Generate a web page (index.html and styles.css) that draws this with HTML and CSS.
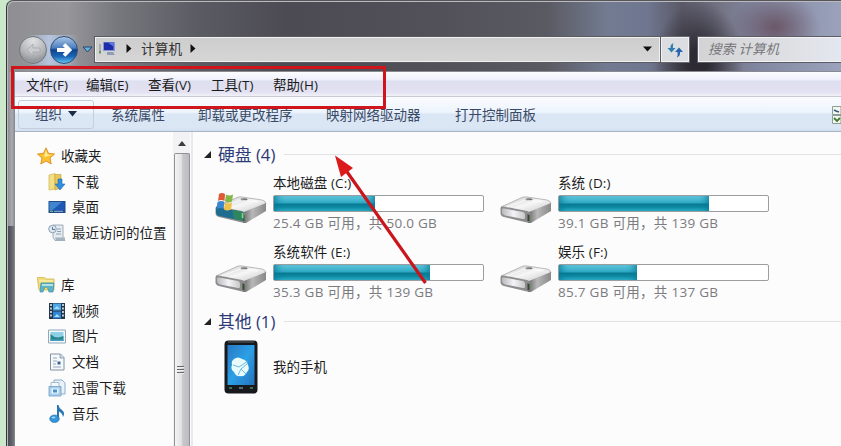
FILE: index.html
```html
<!DOCTYPE html>
<html lang="zh-CN">
<head>
    <meta charset="UTF-8">
    <meta name="viewport" content="width=device-width, initial-scale=1.0">
    <title>计算机</title>
    <link rel="stylesheet" href="styles.css">
</head>
<body>

    <!-- shared shapes -->
    <svg class="defs" width="0" height="0">
        <defs>
            <linearGradient id="driveTop" x1="0" y1="0" x2="1" y2="1">
                <stop offset="0" stop-color="#c9c9c9"/>
                <stop offset=".5" stop-color="#f6f6f6"/>
                <stop offset="1" stop-color="#c5c5c5"/>
            </linearGradient>
            <linearGradient id="driveSide" x1="0" y1="0" x2="1" y2="0">
                <stop offset="0" stop-color="#6a6a6a"/>
                <stop offset=".4" stop-color="#b8b8b8"/>
                <stop offset="1" stop-color="#888"/>
            </linearGradient>
            <linearGradient id="driveFront" x1="0" y1="0" x2="1" y2="0">
                <stop offset="0" stop-color="#b9b9bd"/>
                <stop offset=".5" stop-color="#f4f4f8"/>
                <stop offset="1" stop-color="#c8c8c8"/>
            </linearGradient>
            <linearGradient id="screen" x1="0" y1="0" x2="1" y2="1">
                <stop offset="0" stop-color="#2a78c4"/>
                <stop offset=".5" stop-color="#2ba0e6"/>
                <stop offset="1" stop-color="#2472bd"/>
            </linearGradient>
            <symbol id="drive" viewBox="0 0 54 30">
                <path d="M2 18l28 10 22-13v-6L30 20z" fill="#6d6d6d" opacity=".35"/>
                <path d="M2 12L23 2.500q2-1 5-.5l20 3q4 1 4 4L31 18z" fill="url(#driveTop)" stroke="#aaa" stroke-width=".8"/>
                <path d="M30 17L52 8v8L32 28h-3z" fill="url(#driveSide)"/>
                <path d="M1.500 13q0-2 3-1.500L28 16q3 .6 3 4v5q0 3-3 2.500L5 22q-3.500-1-3.500-4z" fill="#8d8d8d"/>
                <path d="M3 14.500q0-1.500 2-1L24 17q2 .5 2 2.500v3q0 2-2 1.500L6 20.500q-3-.8-3-3z" fill="url(#driveFront)"/>
                <path d="M28.500 19v7l2 .2v-6z" fill="#31482c"/>
                <ellipse cx="30" cy="4.500" rx="3.500" ry="1.300" fill="#777"/>
                <path d="M8 12L26 5l18 2" fill="none" stroke="#fff" opacity=".7"/>
            </symbol>
        </defs>
    </svg>

    <div class="window">

        <!-- address bar -->
        <div class="titlebar">
            <div class="nav-buttons">
                <span class="nav-btn back">
                    <svg width="18" height="16" viewBox="0 0 18 16"><path d="M9 2L3 8l6 6v-4h7V6H9z" fill="#c9cbce" stroke="#a3a5a9" stroke-width=".7"/></svg>
                </span>
                <span class="nav-btn forward">
                    <svg width="18" height="16" viewBox="0 0 18 16"><path d="M2 8h12M9 2.500L14.500 8 9 13.500" fill="none" stroke="#fff" stroke-width="3.800"/></svg>
                </span>
                <svg class="nav-drop" width="11" height="7" viewBox="0 0 11 7"><path d="M1 1h9L5.500 6z" fill="#68aee0" stroke="#23466e"/></svg>
            </div>
            <div class="address">
                <svg width="20" height="16" viewBox="0 0 20 16">
                    <path d="M1 3h2v10H1z" fill="#a7ada8"/>
                    <path d="M1 10h2v2H1z" fill="#5f9c5b"/>
                    <path d="M5 1h12v9H5z" fill="#8b94d2"/>
                    <path d="M6 1.500h9.500v7.500H6z" fill="#1d2cab"/>
                    <path d="M10 1.500h5.500v4z" fill="#5f7be0"/>
                    <path d="M9 11h6l2 3H9z" fill="#8e9fb5"/>
                </svg>
                <svg class="crumb" width="6" height="9" viewBox="0 0 6 9"><path d="M.5 0L5.500 4.500l-5 4.500z" fill="#111"/></svg>
                <span class="crumb-text">计算机</span>
                <svg class="crumb" width="6" height="9" viewBox="0 0 6 9"><path d="M.5 0L5.500 4.500l-5 4.500z" fill="#111"/></svg>
                <svg class="address-drop" width="9" height="6" viewBox="0 0 9 6"><path d="M0 .5h9L4.500 5.500z" fill="#111"/></svg>
            </div>
            <div class="refresh">
                <svg width="16" height="16" viewBox="0 0 16 16">
                    <path d="M6.500 1Q3 2.500 3.500 6H.5l4 4.500 4-4.500H6q-.5-3 .5-5z" fill="#2f7fae"/>
                    <path d="M10 15.500q3.500-1.500 3-5.500h3l-4-4.500L8 10h2.500q.5 3-.5 5.500z" fill="#2665ad"/>
                </svg>
            </div>
            <div class="search">搜索 计算机</div>
        </div>

        <div class="menubar">
            <span>文件(F)</span>
            <span>编辑(E)</span>
            <span>查看(V)</span>
            <span>工具(T)</span>
            <span>帮助(H)</span>
        </div>

        <div class="toolbar">
            <span class="organize">组织 <svg width="9" height="6" viewBox="0 0 9 6"><path d="M0 0h9L4.500 5.500z" fill="#1b2c45"/></svg></span>
            <span>系统属性</span>
            <span>卸载或更改程序</span>
            <span>映射网络驱动器</span>
            <span>打开控制面板</span>
            <svg class="view-btn" width="9" height="18" viewBox="0 0 9 18">
                <path d="M.5.500H9v8H.5zM.5 9.500H9v8H.5z" fill="#f2f6ee" stroke="#8b9f96"/>
                <path d="M2 4l2 1 3 1" fill="none" stroke="#3a5880" stroke-width="1.500"/>
                <path d="M2 12l3 3 3-3" fill="none" stroke="#3d7d2e" stroke-width="1.800"/>
            </svg>
        </div>

        <div class="content">
            <!-- navigation pane -->
            <div class="sidebar">
                <div class="nav-group">
                    <div class="nav-item root">
                        <svg width="18" height="18" viewBox="0 0 18 18"><path d="M9 .8l2.500 5.500 6 .7-4.500 4 1.200 6L9 14l-5.200 3L5 11 .5 7l6-.7z" fill="#f9c02f" stroke="#dd8b24" stroke-width=".9"/><path d="M9 3l1.500 4.500 4.500.5-8 2z" fill="#fff0a0"/></svg>
                        <span>收藏夹</span>
                    </div>
                    <div class="nav-item">
                        <svg width="18" height="18" viewBox="0 0 18 18"><path d="M1 2l6-1.500V16l-6 1z" fill="#f3df83" stroke="#ceb355" stroke-width=".7"/><path d="M7 1.500h6V15l-6 2z" fill="#e9c95b" stroke="#c6a440" stroke-width=".7"/><path d="M10 6h4v5h3l-5 6-5-6h3z" fill="#2f8fdd" stroke="#2168ac" stroke-width=".6"/></svg>
                        <span>下载</span>
                    </div>
                    <div class="nav-item">
                        <svg width="18" height="18" viewBox="0 0 18 18"><path d="M.5 3h17v12H.5z" fill="#234b86"/><path d="M1.500 4h15v8.500h-15z" fill="#1e57b4"/><path d="M1.500 4H14L4 12.500H1.500z" fill="#4185d1"/><path d="M2 13.300h3" stroke="#7ed06b"/><path d="M6 13.300h9" stroke="#91b5db"/></svg>
                        <span>桌面</span>
                    </div>
                    <div class="nav-item">
                        <svg width="18" height="18" viewBox="0 0 18 18"><path d="M5 1h10v13l2 2.500H7l-2-3z" fill="#e4ebf1" stroke="#8b9aab" stroke-width=".8"/><path d="M7 13.500h10v3H8z" fill="#a7b4c0"/><circle cx="4.500" cy="5" r="3.800" fill="#dde7ef" stroke="#8499ad" stroke-width=".9"/><path d="M4.500 3v2.500H7" fill="none" stroke="#577590"/><path d="M9 5h4M9 7.500h4M8 10h5" stroke="#91a3b3"/></svg>
                        <span>最近访问的位置</span>
                    </div>
                </div>
                <div class="nav-group">
                    <div class="nav-item root">
                        <svg width="18" height="18" viewBox="0 0 18 18"><path d="M.5 3V1.500h7L9 3h8v11H2z" fill="#f2dc78" stroke="#cdb552" stroke-width=".8"/><path d="M2 5h14" stroke="#fff6c0"/><path d="M3 16l1-9h13l-1 9h-4q-1-5-3-5t-3 5z" fill="#5bb4c8" stroke="#3d8da8" stroke-width=".7"/><path d="M5 8h11v2H5z" fill="#b5e4df"/></svg>
                        <span>库</span>
                    </div>
                    <div class="nav-item">
                        <svg width="18" height="18" viewBox="0 0 18 18"><path d="M1 1h16v16H1z" fill="#26354a"/><path d="M5 1.500h8v7H5z" fill="#4aa7e8"/><path d="M5 9.500h8v7H5z" fill="#2f85d6"/><path d="M6 7l3-3 3 3zM6 15l3-3 3 3z" fill="#a6dcf6"/><path d="M3 2v14M15 2v14" stroke="#c9d6e4" stroke-width="1.800" stroke-dasharray="2 1.500"/></svg>
                        <span>视频</span>
                    </div>
                    <div class="nav-item">
                        <svg width="18" height="18" viewBox="0 0 18 18"><path d="M.5 3h17v13H.5z" fill="#f5f9fb" stroke="#93a7b7"/><path d="M2.500 5h13v9h-13z" fill="#8ed1e6"/><path d="M2.500 7l4 3 4 .5 5-1.500v5h-13z" fill="#29858e"/><path d="M2.500 12.500h13V14h-13z" fill="#4b9cbc"/></svg>
                        <span>图片</span>
                    </div>
                    <div class="nav-item">
                        <svg width="18" height="18" viewBox="0 0 18 18"><path d="M2.500 1h10L16 4.500V17H2.500z" fill="#f6f9fc" stroke="#8292a4"/><path d="M12 1v4h4" fill="#cfd9e3" stroke="#8292a4" stroke-width=".8"/><path d="M5 5h4M5 8h4M5 11h3M5 14h8" stroke="#93a6bd"/><path d="M9.500 8.500h3v3h-3z" fill="#3d6396"/></svg>
                        <span>文档</span>
                    </div>
                    <div class="nav-item">
                        <svg width="18" height="18" viewBox="0 0 18 18"><path d="M6 1h8l3 3v11H6z" fill="#e9f2f9" stroke="#86a5bf" stroke-width=".9"/><path d="M3 3.500h8V12H3z" fill="#f4f9fc" stroke="#94b0c6" stroke-width=".8"/><path d="M1 7.500h12V17H1z" fill="#a8d0ec" stroke="#6d9dc4" stroke-width=".8"/><path d="M3.500 9.500h7v5h-7z" fill="#eaf5fc"/><path d="M5 10.500h4v3H5z" fill="#4a91cc"/></svg>
                        <span>迅雷下载</span>
                    </div>
                    <div class="nav-item">
                        <svg width="18" height="18" viewBox="0 0 18 18"><path d="M9 0h1.500q.5 3.500 3.500 5 3.500 2.500 1 7-.5-4-4-5.500v8H9z" fill="#2877b3"/><ellipse cx="6.500" cy="13.800" rx="4.800" ry="3.800" fill="#3296d8" stroke="#1e6aa5" stroke-width=".6"/><ellipse cx="5.500" cy="12.500" rx="2" ry="1" fill="#9cd6f5"/></svg>
                        <span>音乐</span>
                    </div>
                </div>
            </div>

            <div class="scrollbar">
                <svg class="scroll-up" width="8" height="5" viewBox="0 0 8 5"><path d="M0 5l4-5 4 5z" fill="#3b3b3b"/></svg>
                <div class="thumb"><span class="grip"></span></div>
            </div>

            <!-- drives -->
            <div class="main">
                <div class="group-title">
                    <svg width="7" height="7" viewBox="0 0 7 7"><path d="M7 0v7H0z" fill="#222"/></svg>
                    <h2>硬盘 (4)</h2>
                    <span class="rule"></span>
                </div>
                <div class="drives">
                    <div class="drive">
                        <div class="drive-icon">
                            <svg width="54" height="30"><use href="#drive"/></svg>
                            <svg class="winflag" width="32" height="30" viewBox="0 0 32 30">
                                <path d="M1 15l25 4.500q3 .6 3 3v4q0 2.500-3 2L4 24q-3-1-3-4z" fill="#1d6d90"/>
                                <path d="M17 18l9 1.500q3 .6 3 3v4q0 2.500-3 2l-7-1.500z" fill="#2e8560"/>
                                <path d="M27.500 21v5" stroke="#8cd08a" stroke-width="1.500"/>
                                <path d="M4 2q3-2 6 0l-.5 7Q6 7 3 9z" fill="#dc5a36"/>
                                <path d="M11 2.500q3 2 7 0l-1 7q-4 2-7 0z" fill="#84b748"/>
                                <path d="M2.500 10q4-2 7 0l-1 7q-3-2-7 0z" fill="#3a86cf"/>
                                <path d="M10 10.500q3 2 7 0l-1 7q-4 2-7 0z" fill="#efc043"/>
                            </svg>
                        </div>
                        <div class="drive-info">
                            <div class="name">本地磁盘 (C:)</div>
                            <div class="bar"><div class="fill" style="width: 48.500%"></div></div>
                            <div class="space">25.4 GB 可用，共 50.0 GB</div>
                        </div>
                    </div>
                    <div class="drive">
                        <div class="drive-icon"><svg width="54" height="30"><use href="#drive"/></svg></div>
                        <div class="drive-info">
                            <div class="name">系统 (D:)</div>
                            <div class="bar"><div class="fill" style="width: 72%"></div></div>
                            <div class="space">39.1 GB 可用，共 139 GB</div>
                        </div>
                    </div>
                    <div class="drive">
                        <div class="drive-icon"><svg width="54" height="30"><use href="#drive"/></svg></div>
                        <div class="drive-info">
                            <div class="name">系统软件 (E:)</div>
                            <div class="bar"><div class="fill" style="width: 74.800%"></div></div>
                            <div class="space">35.3 GB 可用，共 139 GB</div>
                        </div>
                    </div>
                    <div class="drive">
                        <div class="drive-icon"><svg width="54" height="30"><use href="#drive"/></svg></div>
                        <div class="drive-info">
                            <div class="name">娱乐 (F:)</div>
                            <div class="bar"><div class="fill" style="width: 37.300%"></div></div>
                            <div class="space">85.7 GB 可用，共 137 GB</div>
                        </div>
                    </div>
                </div>

                <div class="group-title other">
                    <svg width="7" height="7" viewBox="0 0 7 7"><path d="M7 0v7H0z" fill="#222"/></svg>
                    <h2>其他 (1)</h2>
                    <span class="rule"></span>
                </div>
                <div class="device">
                    <svg width="34" height="54" viewBox="0 0 34 54">
                        <rect x=".5" y=".5" width="33" height="53" rx="4" fill="#17191c"/>
                        <path d="M4 2h26" stroke="#5d6268"/>
                        <path d="M3.500 5h27v40h-27z" fill="url(#screen)"/>
                        <path d="M10 19q4-3 8 0 5 1 6 6 2 4-1 7-2 5-7 4-4 1-6-4-4-3-2-7-1-4 2-6z" fill="#e9fafb"/>
                        <path d="M9 25l6 2 9-6M14 35l3-6 7-6M17 29l5 5" fill="none" stroke="#5fb2e0" stroke-width=".9"/>
                        <path d="M5 48h3M26 48h3" stroke="#4c8a66" stroke-width="1.500"/>
                        <path d="M15 48h4" stroke="#6d8899" stroke-width="1.500"/>
                    </svg>
                    <span>我的手机</span>
                </div>
            </div>
        </div>
    </div>

    <!-- red markup over the window -->
    <div class="mark-box"></div>
    <svg class="mark-arrow" width="100" height="135" viewBox="0 0 100 135">
        <path d="M94.500 131L14 17" stroke="#c9151b" stroke-width="3.200" fill="none"/>
        <path d="M4 3.500l18 12.500-12 9z" fill="#dc1a1a"/>
    </svg>

</body>
</html>
```

FILE: styles.css
```css
* {
    box-sizing: border-box;
}

body {
    margin: 0;
    width: 841px;
    height: 446px;
    overflow: hidden;
    padding-left: 6px;
    background-color: #cbe8ca;
    font-family: "Open Sans", "Noto Sans CJK SC", sans-serif;
    font-size: 13.5px;
    line-height: 20px;
    color: #1c1c1c;
    white-space: nowrap;
}

svg {
    display: block;
    flex: none;
}

.defs {
    position: absolute;
}

/* Window frame */
.window {
    display: flex;
    flex-direction: column;
    height: 446px;
    padding: 0 0 0 8px;
    border-left: 1px solid #34363a;
    border-top: 1px solid #55555a;
    border-top-left-radius: 7px;
    box-shadow: inset 1px 1px 0 #b9b9bf;
    background:
        linear-gradient(to right, #44464b, #5c5e66 4px, #75777f 7px, #8d8f95 8px, transparent 8px) 0 225px no-repeat,
        linear-gradient(to right, #85878c, #a9abb0 5px, #84868b 8px, transparent 8px) 0 71px no-repeat,
        radial-gradient(ellipse 45px 60px at 692px 60px, #2d2a33 20%, transparent) no-repeat,
        radial-gradient(ellipse 45px 34px at 768px 26px, #6b5869, transparent) no-repeat,
        linear-gradient(to right, #8e8e93 0, #96969b 60px, #77777e 110px, #5b5b63 190px, #4c4b54 280px, #52515a 430px, #5a5a62 540px, #727b91 600px, #6f7790 640px, #5b5967 675px, #77788a 720px, #8187a0 750px, #9ba2bb 834px);
}

/* Address bar */
.titlebar {
    display: flex;
    align-items: center;
    height: 71px;
    padding: 29px 0 2px 4px;
    border-bottom: 1px solid #8a8a92;
}

.nav-buttons {
    display: flex;
    align-items: center;
    width: 75px;
    height: 30px;
    border-radius: 15px;
    background: linear-gradient(to right, #8b8d94, #b5c5de 40%, transparent 80%);
}

.nav-btn {
    display: flex;
    align-items: center;
    justify-content: center;
    width: 28px;
    height: 28px;
    margin-right: 3px;
    border-radius: 50%;
}

.back {
    border: 1px solid #74767a;
    background: radial-gradient(circle at 50% 15%, #e0e1e3, #b3b5b9 55%, #96999d 75%);
}

.forward {
    border: 1px solid #30517c;
    background: linear-gradient(#a9c5e5, #4b7ebe 42%, #0d438f 50%, #1a67b7 75%, #62c4f2);
}

.nav-drop {
    margin-left: 1px;
}

.address {
    display: flex;
    align-items: center;
    width: 567px;
    height: 27px;
    padding: 0 8px 2px 3px;
    border: 1px solid #5b5c62;
    background: linear-gradient(#cdcdce, #d6d6d7);
    box-shadow: inset 0 0 0 1px #f0f0f1;
}

.crumb {
    margin: 0 9px 0 8px;
}

.crumb-text {
    color: #333;
    font-size: 13.7px;
}

.address-drop {
    margin-left: auto;
}

.refresh {
    display: flex;
    align-items: center;
    justify-content: center;
    width: 29px;
    height: 27px;
    border: 1px solid #66676e;
    border-left: 0;
    background-color: #dcdde0;
    box-shadow: inset 0 0 0 1px #f2f2f4;
}

.search {
    flex: 1;
    height: 27px;
    margin-left: 7px;
    padding: 2px 0 0 10px;
    border: 1px solid #5c5b64;
    border-right: 0;
    box-shadow: inset 1px 1px 0 #f4f4f6, inset 0 -1px 0 #f4f4f6;
    background: linear-gradient(to right, #d3d3d5, #dedfe3 60%, #e3e7ef);
    color: #77777b;
    font-style: italic;
}

/* Menu and command bar */
.menubar {
    display: grid;
    grid-template-columns: 60px 62px 63px 62px auto;
    height: 25px;
    padding: 3px 0 0 11px;
    border-bottom: 1px solid #c9c9d6;
    background: linear-gradient(#fcfdff 0, #eeeffa 8px, #dedff0 9px, #e3e1f2 20px, #f1f1f8);
}

.toolbar {
    display: grid;
    grid-template-columns: 96px 87px 128px 129px 1fr 9px;
    height: 35px;
    padding: 8px 0 0;
    border-bottom: 1px solid #a5b4c7;
    background: linear-gradient(#fafcff, #edf4fd 45%, #dce7f6 50%, #dbe6f5 92%, #cfdeee);
    color: #3a4a66;
}

.organize {
    display: flex;
    align-items: center;
    gap: 6px;
    width: 76px;
    height: 29px;
    margin: -5px 0 0 3px;
    padding: 0 0 1px 16px;
    border: 1px solid #c4cedd;
    border-radius: 3px;
}

.view-btn {
    margin-top: 1px;
}

.content {
    display: flex;
    flex: 1;
    min-height: 0;
    background-color: #fcfcfd;
}

/* Navigation pane */
.sidebar {
    width: 158px;
    padding-top: 11px;
}

.nav-group {
    margin-bottom: 25.8px;
}

.nav-item {
    display: flex;
    align-items: center;
    gap: 6px;
    height: 25.8px;
    padding-left: 33px;
}

.nav-item.root {
    padding-left: 22px;
}

.scrollbar {
    display: flex;
    flex-direction: column;
    align-items: center;
    width: 17px;
    padding-top: 9px;
    background-color: #f2f2f4;
}

.thumb {
    display: flex;
    justify-content: center;
    flex: 1;
    width: 16px;
    margin-top: 7px;
    padding-top: 212px;
    border: 1px solid #919197;
    border-bottom: 0;
    border-radius: 2px 2px 0 0;
    background: linear-gradient(to right, #f4f4f5, #e3e3e5 45%, #c9c9cd 55%, #bbbbc0);
}

.grip {
    width: 7px;
    height: 9px;
    margin-right: 2px;
    background: repeating-linear-gradient(#67676d 0 1px, #eee 1px 2px, transparent 2px 3px);
}

/* Drive list */
.main {
    flex: 1;
    min-width: 0;
    margin-left: 1px;
    padding: 10px 0 0 11px;
    border-left: 2px solid #e8e9f1;
}

.group-title {
    display: flex;
    align-items: center;
    height: 25px;
}

.group-title h2 {
    margin: 0 9px 0 7px;
    font-size: 16.8px;
    font-weight: normal;
    color: #2c3a78;
}

.rule {
    flex: 1;
    height: 1px;
    background-color: #e1e2e6;
}

.drives {
    display: grid;
    grid-template-columns: 285px 285px;
    grid-auto-rows: 68.5px;
    padding: 7px 0 0 10px;
}

.drive {
    display: flex;
}

.drive-icon {
    position: relative;
    width: 59px;
    padding-top: 21px;
}

/* Windows flag sits on the system drive */
.winflag {
    position: absolute;
    left: 1px;
    top: 18px;
}

.drive-info {
    width: 211px;
}

.name {
    margin-top: -1px;
    letter-spacing: .1px;
}

.bar {
    height: 17px;
    margin: 2px 0 1px;
    border: 1px solid #9c9da1;
    border-radius: 2px;
    background-color: #fff;
}

.fill {
    height: 100%;
    background: linear-gradient(#68cbe0, #2da8c4 45%, #087991 55%, #0e8aa4 75%, #31b2c8);
    box-shadow: inset 8px 0 8px -6px #087c9a, inset -8px 0 8px -6px #087c9a;
}

.space {
    color: #7b7b7f;
    letter-spacing: .28px;
}

.group-title.other {
    margin-top: -2px;
}

.device {
    display: flex;
    align-items: center;
    gap: 15px;
    padding: 6px 0 0 20px;
}

/* Red markup */
.mark-box {
    position: absolute;
    left: 11px;
    top: 66px;
    width: 375px;
    height: 43px;
    border: 3px solid #d0141b;
}

.mark-arrow {
    position: absolute;
    left: 331px;
    top: 152px;
}
```
